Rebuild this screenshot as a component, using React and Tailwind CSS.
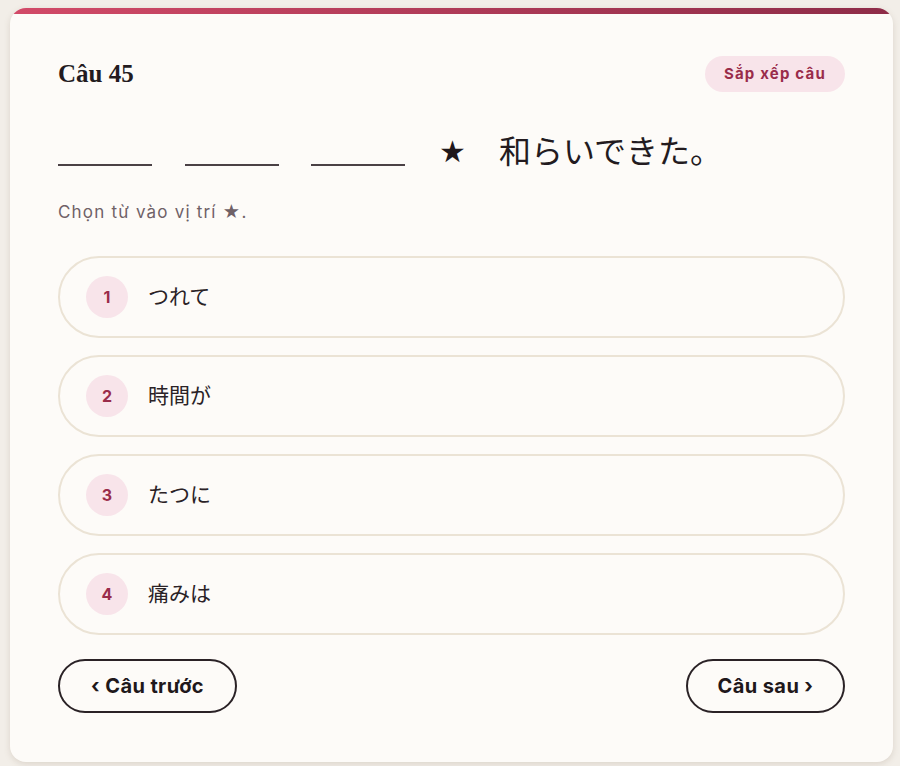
const OPTIONS = [
  { n: 1, text: "つれて" },
  { n: 2, text: "時間が" },
  { n: 3, text: "たつに" },
  { n: 4, text: "痛みは" },
];

const SANS = "font-['Inter','Noto_Sans_CJK_JP',sans-serif]";

export default function App() {
  return (
    <div className="min-h-[766px] bg-[#f2eee8] pt-2 pl-[10px]">
      <div className={`w-[883px] bg-[#fdfbf8] rounded-2xl overflow-hidden shadow-[0_2px_6px_rgba(120,100,80,0.18)] ${SANS}`}>
        <div className="h-1.5 bg-gradient-to-r from-[#d24a68] to-[#8e2c48]" />
        <div className="px-12 pt-[42px] pb-[49px]">
          <div className="flex items-center justify-between h-9">
            <h2 className="font-['Liberation_Serif',serif] font-bold text-[25px] text-[#231b1f]">Câu 45</h2>
            <span className="h-9 px-[19px] flex items-center rounded-full bg-[#f8e4ea] text-[#9a2c4a] text-[15px] font-bold tracking-[0.08em]">
              Sắp xếp câu
            </span>
          </div>

          <div className="mt-10 h-10 flex items-center">
            <div className="self-end mb-[6px] w-[94px] h-[2px] bg-[#4a4145]" />
            <div className="self-end mb-[6px] ml-[33px] w-[94px] h-[2px] bg-[#4a4145]" />
            <div className="self-end mb-[6px] ml-[32px] w-[94px] h-[2px] bg-[#4a4145]" />
            <span className="ml-[34px] text-[30px] leading-none text-[#1f181b] font-['DejaVu_Sans',sans-serif]">★</span>
            <span className="ml-[33px] text-[32px] leading-none text-[#231b1f] font-['Liberation_Serif','Noto_Sans_CJK_JP',serif]">和らいできた。</span>
          </div>

          <p className="mt-7 text-[17px] leading-6 tracking-[0.07em] text-[#6f6167]">Chọn từ vào vị trí ★.</p>

          <div className="mt-8 flex flex-col gap-[17px]">
            {OPTIONS.map((o) => (
              <div key={o.n} className="h-[82px] rounded-full border-2 border-[#ebe3d5] flex items-center pl-[26px]">
                <span className="w-[42px] h-[42px] rounded-full bg-[#f8e4ea] text-[#9a2c4a] font-bold text-[16px] flex items-center justify-center">
                  {o.n}
                </span>
                <span className="ml-[20px] text-[21px] text-[#2a2226]">{o.text}</span>
              </div>
            ))}
          </div>

          <div className="mt-6 flex justify-between">
            <button className="h-[54px] w-[179px] rounded-full border-2 border-[#2a2226] text-[20px] font-bold tracking-[0.02em] text-[#1f181b] flex items-center justify-center">
              ‹ Câu trước
            </button>
            <button className="h-[54px] w-[159px] rounded-full border-2 border-[#2a2226] text-[20px] font-bold tracking-[0.02em] text-[#1f181b] flex items-center justify-center">
              Câu sau ›
            </button>
          </div>
        </div>
      </div>
    </div>
  );
}
